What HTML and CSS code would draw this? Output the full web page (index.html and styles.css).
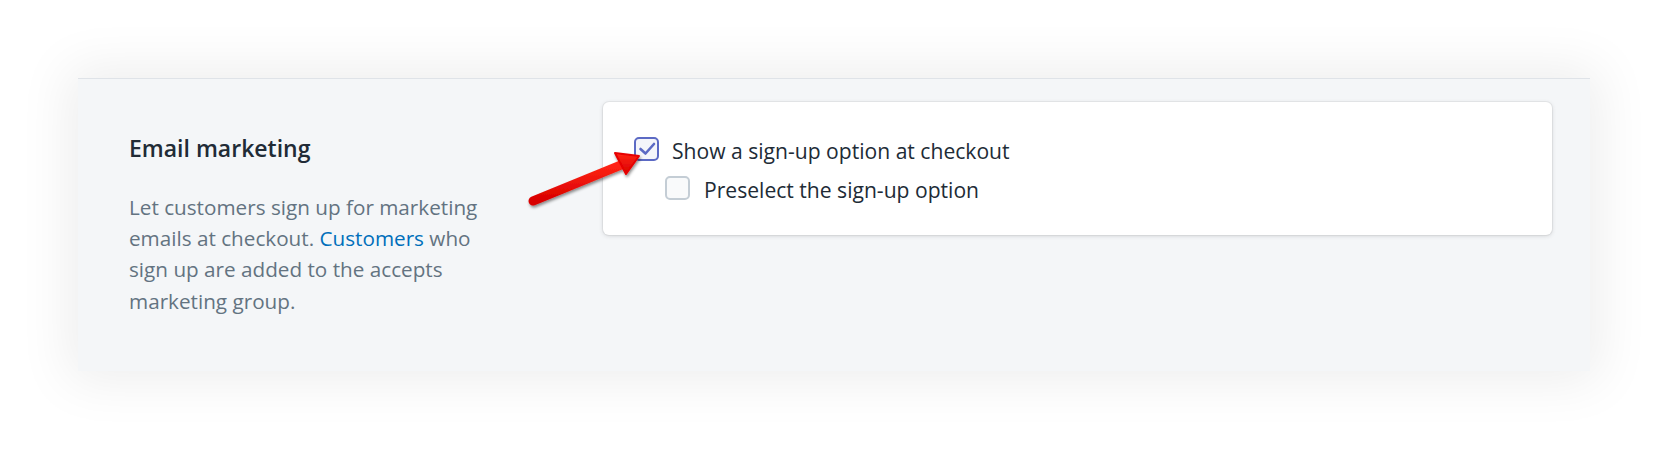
FILE: index.html
```html
<!DOCTYPE html>
<html lang="en">
<head>
<meta charset="utf-8">
<title>Email marketing</title>
<link rel="stylesheet" href="styles.css">
</head>
<body>
<div class="stage">
  <section class="panel">
    <div class="intro">
      <h2 class="title">Email marketing</h2>
      <p class="desc">Let customers sign up for marketing emails at checkout. <a class="link" href="#">Customers</a> who sign up are added to the accepts marketing group.</p>
    </div>
    <div class="card">
      <label class="option">
        <span class="box box-checked">
          <svg viewBox="0 0 20 20" width="20" height="20" aria-hidden="true"><path d="M3.5 10 L8.5 14.5 L17 5" fill="none" stroke="#5c6ac4" stroke-width="2.6" stroke-linecap="round" stroke-linejoin="round"/></svg>
        </span>
        <span class="label">Show a sign-up option at checkout</span>
      </label>
      <label class="option option-child">
        <span class="box"></span>
        <span class="label">Preselect the sign-up option</span>
      </label>
    </div>
    <svg class="arrow" viewBox="0 0 130 70" width="130" height="70" aria-hidden="true">
      <defs>
        <linearGradient id="rg" x1="0" y1="0" x2="0" y2="1">
          <stop offset="0" stop-color="#ff2414"/>
          <stop offset="1" stop-color="#d80000"/>
        </linearGradient>
        <filter id="sh" x="-20%" y="-40%" width="140%" height="180%">
          <feDropShadow dx="1" dy="2" stdDeviation="1.5" flood-color="#000" flood-opacity="0.45"/>
        </filter>
      </defs>
      <g filter="url(#sh)">
        <path d="M6 58 L94 22" stroke="url(#rg)" stroke-width="9" stroke-linecap="round" fill="none"/>
        <path d="M112 13 L88 10 L99 31 Z" fill="url(#rg)" stroke="#e60000" stroke-width="2" stroke-linejoin="round"/>
      </g>
    </svg>
  </section>
</div>
</body>
</html>
```

FILE: styles.css
```css
html, body {
  margin: 0;
  padding: 0;
  background: #ffffff;
}

.stage {
  padding: 78px 78px;
  font-family: "Open Sans", "Noto Sans", Arial, sans-serif;
}

.panel {
  position: relative;
  box-sizing: border-box;
  display: flex;
  align-items: flex-start;
  height: 293px;
  padding: 23px 38px 0 51px;
  background: #f4f6f8;
  border-top: 1px solid #dfe3e8;
  box-shadow: 0 0 50px 10px rgba(0, 0, 0, 0.07);
}

.intro {
  width: 352px;
  flex: none;
  padding-top: 31px;
}

.title {
  margin: 0;
  font-size: 23px;
  font-weight: 600;
  line-height: 30px;
  color: #212b36;
}

.desc {
  margin: 28.5px 0 0;
  font-size: 20.7px;
  line-height: 31.4px;
  color: #637381;
}

.link {
  color: #006fbb;
  text-decoration: none;
}

.card {
  flex: 1;
  margin-left: 122px;
  background: #ffffff;
  border-radius: 6px;
  box-shadow: 0 0 0 1px rgba(63, 63, 68, 0.06), 0 1px 4px rgba(63, 63, 68, 0.18);
  padding: 35px 31px 35px;
  display: flex;
  flex-direction: column;
  gap: 15px;
}

.option {
  display: flex;
  align-items: center;
  gap: 13px;
  font-size: 21.1px;
  line-height: 22px;
  color: #212b36;
}

.label {
  padding-top: 3px;
  margin-bottom: -1px;
}

.option-child {
  padding-left: 31px;
  gap: 14px;
}

.box {
  width: 25px;
  height: 24px;
  box-sizing: border-box;
  border: 2px solid #c4cdd5;
  border-radius: 5px;
  background: #f9fafb;
  display: flex;
  align-items: center;
  justify-content: center;
  flex: none;
}

.box-checked {
  border-color: #5c6ac4;
  background: #f4f5fa;
}

.arrow {
  position: absolute;
  left: 449px;
  top: 64px;
}
```
